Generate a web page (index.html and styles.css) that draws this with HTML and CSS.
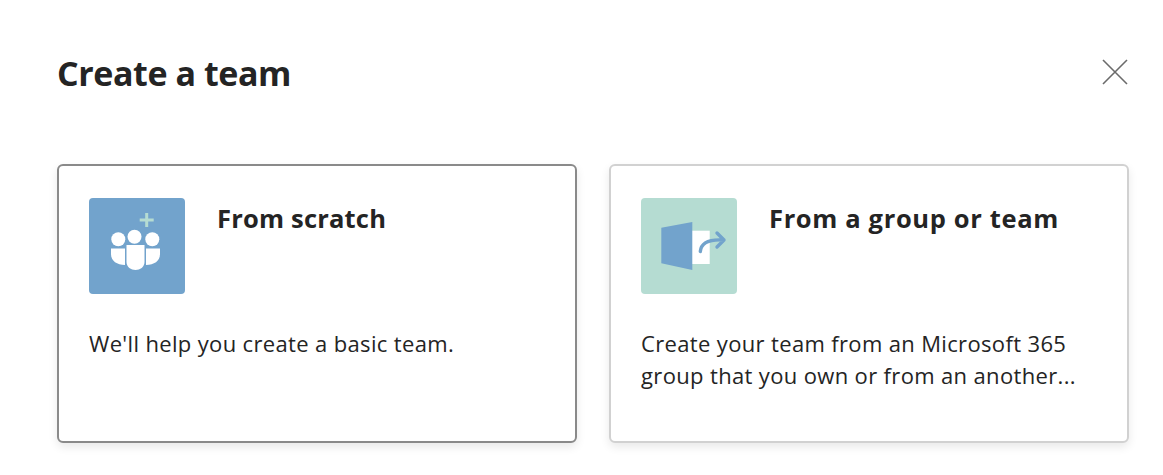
FILE: index.html
```html
<!DOCTYPE html>
<html lang="en">
<head>
<meta charset="utf-8">
<title>Create a team</title>
<link rel="stylesheet" href="styles.css">
</head>
<body>
<main class="dialog">
  <header class="header">
    <h1 class="title">Create a team</h1>
    <button class="close" aria-label="Close">
      <svg width="26" height="26" viewBox="0 0 26 26"><path d="M1 1L25 25M25 1L1 25" stroke="#6b6b6b" stroke-width="1.6" fill="none"/></svg>
    </button>
  </header>
  <section class="cards">
    <article class="card card-active">
      <div class="card-top">
        <div class="tile tile-blue">
          <svg width="96" height="96" viewBox="0 0 96 96">
            <path d="M57.700 15V29M50.700 22H64.700" stroke="#b5dcd2" stroke-width="3" fill="none"/>
            <circle cx="29.300" cy="41.300" r="7" fill="#fff"/><circle cx="45.500" cy="38.700" r="7" fill="#fff"/><circle cx="63.300" cy="41.300" r="7" fill="#fff"/>
            <path d="M22 50.500H36V67C28 67 22 63 22 56Z" fill="#fff"/>
            <path d="M37.500 47H55.500V64C55.500 69 51 72 46.500 72C42 72 37.500 69 37.500 64Z" fill="#fff"/>
            <path d="M57 50.500H71V56C71 63 65 67 57 67Z" fill="#fff"/>
          </svg>
        </div>
        <h2 class="card-title">From scratch</h2>
      </div>
      <p class="card-text">We'll help you create a basic team.</p>
    </article>
    <article class="card">
      <div class="card-top">
        <div class="tile tile-green">
          <svg width="96" height="96" viewBox="0 0 96 96">
            <rect x="50" y="32.700" width="18.700" height="33.300" fill="#fff"/>
            <path d="M20.300 29.700L51.300 24V72L20.300 65.300Z" fill="#72a3cc"/>
            <path d="M59.300 53.500C60 45 68 41 83 42M76 35L83 42L76 49" stroke="#72a3cc" stroke-width="3.400" stroke-linecap="round" stroke-linejoin="round" fill="none"/>
          </svg>
        </div>
        <h2 class="card-title card-title-wide">From a group or team</h2>
      </div>
      <p class="card-text">Create your team from an Microsoft 365 group that you own or from an another...</p>
    </article>
  </section>
</main>
</body>
</html>
```
FILE: styles.css
```css
* { box-sizing: border-box; }
html, body { margin: 0; height: 100%; background: #fff; overflow: hidden; }
body { font-family: "Open Sans", "Noto Sans", sans-serif; color: #242424; }
.dialog { padding: 50px 34px 0 57px; }
.header { display: flex; justify-content: space-between; align-items: flex-start; height: 114px; }
.title { margin: 0; font-size: 34px; line-height: 47px; font-weight: 700; letter-spacing: -.42px; }
.close { padding: 0; margin: 9px 1px 0 0; border: 0; background: none; display: block; height: 26px; }
.close svg { display: block; }
.cards { display: grid; grid-template-columns: 520px 520px; gap: 32px; }
.card { height: 279px; padding: 32px 30px; border: 2px solid #d1d1d1; border-radius: 6px; background: #fff; box-shadow: 0 4px 10px rgba(0,0,0,.09); }
.card-active { border-color: #8a8a8a; }
.card-top { display: flex; gap: 32px; height: 96px; }
.tile { width: 96px; height: 96px; border-radius: 4px; flex: none; }
.tile svg { display: block; }
.tile-blue { background: #72a3cc; }
.tile-green { background: #b5dcd2; }
.card-title { margin: 0; font-size: 25.500px; line-height: 40px; font-weight: 700; letter-spacing: .2px; }
.card-title-wide { letter-spacing: .65px; }
.card-text { margin: 33px 0 0; font-size: 22px; line-height: 32px; letter-spacing: .35px; }
```
